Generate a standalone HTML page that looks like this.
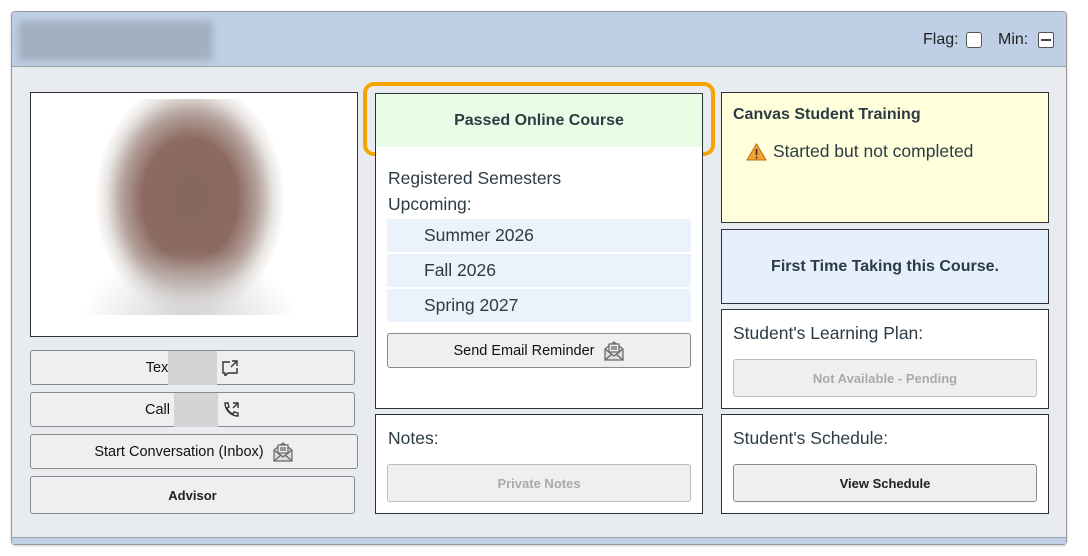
<!DOCTYPE html>
<html><head><style>
*{box-sizing:border-box;margin:0;padding:0}
body{width:1088px;height:556px;background:#fff;font-family:"Liberation Sans",Arial,sans-serif;position:relative;overflow:hidden;color:#2d3b45}
.a{position:absolute}
.frame{left:11px;top:11px;width:1056px;height:534px;border:1px solid #999;border-radius:4px;background:#e8ecf1;box-shadow:0 1px 2px rgba(0,0,0,.2)}
.hdr{left:12px;top:12px;width:1054px;height:55px;background:#bfd0e6;border-bottom:1px solid #9aa3ad;border-radius:3px 3px 0 0}
.box{border:1px solid #2d3035;background:#fff}
.btn{border:1px solid #8a8a8a;border-radius:3px;background:#efefef;font-size:14.5px;color:#111;display:flex;align-items:center;justify-content:center}
.b{font-weight:bold;font-size:13px}
.t{font-size:17.5px;color:#2d3b45}
.row{background:#eaf2fb;font-size:17.5px;padding-left:37px;display:flex;align-items:center}
</style></head><body>
<div class="a frame"></div>
<div class="a hdr"></div>
<div class="a" style="left:18px;top:21px;width:195px;height:40px;background:#a3afbf;filter:blur(4px)"></div>
<div class="a" style="left:923px;top:31px;font-size:16px;color:#222">Flag:</div>
<div class="a" style="left:966px;top:32px;width:16px;height:16px;border:1px solid #555;border-radius:3px;background:#fff"></div>
<div class="a" style="left:998px;top:31px;font-size:16px;color:#222">Min:</div>
<div class="a" style="left:1038px;top:32px;width:16px;height:16px;border:1px solid #555;border-radius:2px;background:#fff"><div style="position:absolute;left:2px;top:6px;width:10px;height:2px;background:#444"></div></div>

<div class="a box" style="left:30px;top:92px;width:328px;height:245px"></div>
<div class="a" style="left:85px;top:99px;width:205px;height:216px;background:radial-gradient(ellipse 110px 80px at 105px 230px,#d0d0d0 0%,rgba(255,255,255,0) 100%),radial-gradient(ellipse 95px 120px at 105px 100px,#86665e 0%,#8c6a60 50%,#b5a39d 72%,#e8e4e2 88%,#fff 100%)"></div>

<div class="a btn" style="left:30px;top:350px;width:325px;height:35px;border-color:#888">Tex<span style="display:inline-block;width:49px;height:34px;background:#d4d4d4"></span>&nbsp;
<svg width="18" height="16" viewBox="0 0 18 16" fill="none" stroke="#333" stroke-width="1.4"><path d="M9 2H2v11h2v3l3-3h9V8"/><path d="M11 1h5v5M16 1l-6 6"/></svg></div>
<div class="a btn" style="left:30px;top:392px;width:325px;height:35px">Call&nbsp;<span style="display:inline-block;width:44px;height:34px;background:#d4d4d4"></span>&nbsp;
<svg width="18" height="18" viewBox="0 0 18 18" fill="none" stroke="#333" stroke-width="1.4"><path d="M3 2l3 0 1 4-2 1c1 3 3 5 6 6l1-2 4 1v3c-7 0-13-6-13-13z"/><path d="M11 2h5v5M16 2l-5 5"/></svg></div>
<div class="a btn" style="left:30px;top:434px;width:328px;height:35px">Start Conversation (Inbox)&nbsp;&nbsp;
<svg width="22" height="20" viewBox="0 0 22 20" fill="#ddd" stroke="#666" stroke-width="1.2"><path d="M2 8l9-7 9 7v11H2z"/><rect x="6" y="3" width="10" height="8" fill="#eee"/><path d="M8 6h6M8 8h6M2 8l9 7 9-7M2 19l7-6M20 19l-7-6" fill="none"/></svg></div>
<div class="a btn b" style="left:30px;top:476px;width:325px;height:38px;color:#222">Advisor</div>

<div class="a" style="left:363px;top:82px;width:352px;height:74px;border:4px solid #f5a400;border-radius:11px"></div>
<div class="a" style="left:375px;top:93px;width:328px;height:55px;border:1px solid #2d3035;background:#e8fde5;display:flex;align-items:center;justify-content:center;font-weight:bold;font-size:16px">Passed Online Course</div>
<div class="a" style="left:375px;top:147px;width:328px;height:262px;border:1px solid #2d3035;border-top:none;background:#fff"></div>
<div class="a t" style="left:388px;top:168px">Registered Semesters</div>
<div class="a t" style="left:388px;top:194px">Upcoming:</div>
<div class="a row" style="left:387px;top:219px;width:304px;height:33px">Summer 2026</div>
<div class="a row" style="left:387px;top:254px;width:304px;height:33px">Fall 2026</div>
<div class="a row" style="left:387px;top:289px;width:304px;height:33px">Spring 2027</div>
<div class="a btn" style="left:387px;top:333px;width:304px;height:35px">Send Email Reminder&nbsp;&nbsp;
<svg width="22" height="20" viewBox="0 0 22 20" fill="#ddd" stroke="#666" stroke-width="1.2"><path d="M2 8l9-7 9 7v11H2z"/><rect x="6" y="3" width="10" height="8" fill="#eee"/><path d="M8 6h6M8 8h6M2 8l9 7 9-7M2 19l7-6M20 19l-7-6" fill="none"/></svg></div>

<div class="a box" style="left:375px;top:414px;width:328px;height:100px"></div>
<div class="a t" style="left:388px;top:428px">Notes:</div>
<div class="a btn b" style="left:387px;top:464px;width:304px;height:38px;color:#aaa;border-color:#bbb">Private Notes</div>

<div class="a" style="left:721px;top:92px;width:328px;height:131px;border:1px solid #2d3035;background:#ffffdc"></div>
<div class="a" style="left:733px;top:106px;font-weight:bold;font-size:16px">Canvas Student Training</div>
<svg class="a" style="left:746px;top:143px" width="21" height="18" viewBox="0 0 21 18"><path d="M10.5 1L20 17H1z" fill="#f4a233" stroke="#b76e10" stroke-width="1"/><path d="M10.5 6v6M10.5 13.5v2" stroke="#333" stroke-width="1.6"/></svg>
<div class="a t" style="left:773px;top:141px">Started but not completed</div>

<div class="a" style="left:721px;top:229px;width:328px;height:75px;border:1px solid #2d3035;background:#e6f0fc;display:flex;align-items:center;justify-content:center;font-weight:bold;font-size:16px">First Time Taking this Course.</div>

<div class="a box" style="left:721px;top:309px;width:328px;height:100px"></div>
<div class="a t" style="left:733px;top:323px">Student's Learning Plan:</div>
<div class="a btn b" style="left:733px;top:359px;width:304px;height:38px;color:#aaa;border-color:#bbb">Not Available - Pending</div>

<div class="a box" style="left:721px;top:414px;width:328px;height:100px"></div>
<div class="a t" style="left:733px;top:428px">Student's Schedule:</div>
<div class="a btn b" style="left:733px;top:464px;width:304px;height:38px;color:#222">View Schedule</div>

<div class="a" style="left:12px;top:537px;width:1054px;height:7px;background:#bfd0e6;border-top:1px solid #9aa3ad"></div>
</body></html>
